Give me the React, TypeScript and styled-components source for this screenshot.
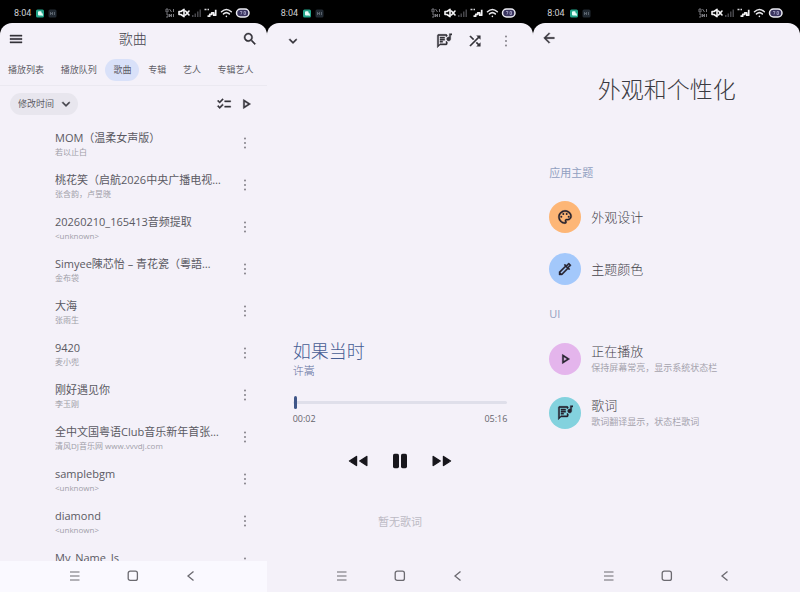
import React, { useState } from "react";
import styled, { createGlobalStyle, css } from "styled-components";
import {
  MdArrowBack,
  MdChecklist,
  MdExpandMore,
  MdMenu,
  MdOutlineColorize,
  MdOutlineLyrics,
  MdOutlinePalette,
  MdOutlinePlayArrow,
  MdSearch,
  MdShuffle,
} from "react-icons/md";

const Global = createGlobalStyle`
  * { box-sizing: border-box; }
  body {
    margin: 0;
    background: #000;
    color: #45444c;
    font-family: "Open Sans", "Noto Sans CJK SC", sans-serif;
    font-weight: 300;
  }
  h1, h2, p, ul { margin: 0; padding: 0; font-weight: inherit; }
  button, select, input { font: inherit; color: inherit; margin: 0; }
  svg { display: block; flex: none; }
`;

const heavierGlyph = css`
  svg[viewBox="0 0 24 24"] path:not([fill="none"]) {
    stroke-width: 0.6;
  }
`;

const Page = styled.main`
  display: grid;
  grid-template-columns: repeat(3, minmax(0, 1fr));
  height: 100vh;
  background: #000;
`;

const Phone = styled.section`
  display: flex;
  flex-direction: column;
  min-width: 0;
  min-height: 0;
`;

const StatusRow = styled.div`
  display: flex;
  align-items: center;
  flex: none;
  height: 23px;
  padding: 3px 16px 0 14px;
  color: #d0d0d4;
`;

const Clock = styled.time`
  font-family: Roboto, sans-serif;
  font-size: 9px;
  font-weight: 400;
  line-height: 12px;
  margin-right: 4px;
`;

const Sheet = styled.div`
  display: flex;
  flex-direction: column;
  flex: 1;
  min-height: 0;
  overflow: hidden;
  background: #f4f1f9;
  border-radius: 12px 12px 0 0;
`;

const IconButton = styled.button<{ $color?: string }>`
  display: flex;
  align-items: center;
  justify-content: center;
  flex: none;
  width: 20px;
  height: 20px;
  padding: 0;
  border: 0;
  background: none;
  color: ${(p) => p.$color ?? "#34333a"};
  ${heavierGlyph}
`;

const NavBar = styled.nav<{ $raised?: boolean }>`
  display: flex;
  align-items: center;
  justify-content: center;
  gap: 38px;
  flex: none;
  height: 31px;
  padding-bottom: 2px;
  margin-top: auto;
  background: ${(p) => (p.$raised ? "#faf9ff" : "transparent")};
`;

const LibraryHeader = styled.header`
  display: flex;
  align-items: center;
  justify-content: space-between;
  flex: none;
  height: 32px;
  padding: 0 7px 0 6px;
`;

const LibraryTitle = styled.h1`
  font-size: 14px;
  line-height: 20px;
`;

const Tabs = styled.div`
  display: flex;
  align-items: center;
  justify-content: space-between;
  flex: none;
  height: 31px;
  padding: 0 5px 0 0;
  border-bottom: 1px solid #ebe9f1;
`;

const Tab = styled.button<{ $active: boolean }>`
  height: 22px;
  padding: 0 8px;
  border: 0;
  border-radius: 11px;
  font-size: 9px;
  font-weight: 400;
  line-height: 22px;
  white-space: nowrap;
  color: #5e5d66;
  background: ${(p) => (p.$active ? "#d9e1f9" : "transparent")};
`;

const SortBar = styled.div`
  display: flex;
  align-items: center;
  justify-content: space-between;
  flex: none;
  height: 36px;
  padding: 0 11px 0 10px;
`;

const SortBox = styled.label`
  display: flex;
  align-items: center;
  height: 22px;
  padding: 0 4px 0 8px;
  border-radius: 11px;
  background: #e8e6ee;
  ${heavierGlyph}
`;

const SortSelect = styled.select`
  appearance: none;
  width: 40px;
  padding: 0;
  border: 0;
  outline: 0;
  background: transparent;
  font-size: 9px;
  font-weight: 400;
  line-height: 20px;
  color: #5e5d66;
`;

const SortActions = styled.div`
  display: flex;
  gap: 2px;
`;

const SongList = styled.ul`
  flex: 1;
  min-height: 0;
  overflow: hidden;
  list-style: none;
`;

const SongRow = styled.li`
  display: flex;
  align-items: center;
  height: 42px;
  padding: 0 12px 0 55px;
`;

const SongText = styled.div`
  flex: 1;
  min-width: 0;
`;

const SongName = styled.p`
  white-space: nowrap;
  font-size: 11px;
  font-weight: 400;
  line-height: 18px;
  color: #5a5962;
`;

const SongArtist = styled.p`
  white-space: nowrap;
  font-size: 8px;
  font-weight: 400;
  line-height: 10px;
  color: #a09ea8;
`;

const PlayerHeader = styled.header`
  display: flex;
  align-items: center;
  gap: 11px;
  flex: none;
  height: 36px;
  padding: 0 17px 0 16px;
`;

const Spacer = styled.div`
  flex: 1;
`;

const Player = styled.div`
  display: flex;
  flex-direction: column;
  flex: 1;
  justify-content: flex-end;
  padding: 0 26px 31px;
`;

const TrackTitle = styled.h1`
  font-size: 18px;
  line-height: 24px;
  color: #465d94;
`;

const TrackArtist = styled.p`
  font-size: 11px;
  line-height: 16px;
  color: #5f6f9c;
`;

const Seek = styled.input`
  appearance: none;
  display: block;
  width: 100%;
  height: 14px;
  margin: 16px 0 0;
  background: transparent;
  &::-webkit-slider-runnable-track {
    height: 3px;
    border-radius: 2px;
    background: #dfdfea;
  }
  &::-webkit-slider-thumb {
    appearance: none;
    width: 3px;
    height: 13px;
    margin-top: -5px;
    border-radius: 2px;
    background: #3f5688;
  }
`;

const Times = styled.div`
  display: flex;
  justify-content: space-between;
  padding-top: 4px;
  font-size: 9px;
  font-weight: 400;
  line-height: 12px;
  color: #66656d;
`;

const Controls = styled.div`
  display: flex;
  align-items: center;
  justify-content: center;
  gap: 22px;
  margin-top: 26px;
`;

const LyricsHint = styled.p`
  margin-top: 43px;
  text-align: center;
  font-size: 11px;
  font-weight: 400;
  line-height: 16px;
  color: #bcbac4;
`;

const SettingsHeader = styled.header`
  flex: none;
  height: 32px;
  padding: 5px 0 0 6px;
`;

const SettingsTitle = styled.h1`
  padding: 18px 0 58px;
  text-align: center;
  font-size: 23px;
  line-height: 32px;
  color: #3b3a41;
`;

const Group = styled.section`
  padding: 0 16px;
`;

const GroupTitle = styled.h2`
  font-size: 11px;
  font-weight: 400;
  line-height: 20px;
  color: #919fc0;
`;

const Options = styled.ul`
  display: flex;
  flex-direction: column;
  gap: 20px;
  padding: 18px 0 19px;
  list-style: none;
`;

const OptionButton = styled.button`
  display: flex;
  align-items: center;
  gap: 10px;
  width: 100%;
  padding: 0;
  border: 0;
  background: none;
  text-align: left;
`;

const OptionIcon = styled.span<{ $tint: string }>`
  display: flex;
  align-items: center;
  justify-content: center;
  flex: none;
  width: 32px;
  height: 32px;
  border-radius: 50%;
  color: #25222e;
  background: ${(p) => p.$tint};
  ${heavierGlyph}
`;

const OptionName = styled.span`
  display: block;
  font-size: 13px;
  line-height: 18px;
`;

const OptionNote = styled.span`
  display: block;
  font-size: 9px;
  font-weight: 400;
  line-height: 16px;
  color: #a5a3ad;
`;

function StatusBar() {
  return (
    <StatusRow>
      <Clock>8:04</Clock>
      <svg width="22" height="9" viewBox="0 0 22 9" aria-hidden="true">
        <rect x="1" y="0.5" width="8" height="8" rx="1.5" fill="#22a389" />
        <path d="M3 3.2a1 1 0 0 1 1-1h1.6a1 1 0 0 1 1 1v1h.6a.8.8 0 0 1 .6.8v2L6.7 6.4H4a1 1 0 0 1-1-1z" fill="#e8fffa" />
        <rect x="13.5" y="0.5" width="8" height="8" rx="1.5" fill="#222a33" />
        <path d="M15.5 3v3M15.5 4.5h2M17.5 3v3M19.5 3v3" stroke="#66707a" strokeWidth="0.8" />
      </svg>
      <Spacer />
      <svg width="86" height="12" viewBox="0 0 86 12" aria-hidden="true">
        <g fill="none" stroke="#85858a" strokeWidth="0.9">
          <path d="M1 2v3h2V2zM4.5 2l2 3M8.5 2v3M1 7h2v3H1M4.5 7v3l2-3v3M8.5 7v3" />
        </g>
        <g fill="none" stroke="#f4f4f6" strokeWidth="1.6" strokeLinejoin="round" strokeLinecap="round">
          <path d="M14 4.5h2l3-2.2v7.4l-3-2.2h-2zM20.5 4l3.5 4M24 4l-3.5 4" />
        </g>
        <g fill="#46464b">
          <rect x="27" y="8" width="1.5" height="2" />
          <rect x="29.5" y="6.5" width="1.5" height="3.5" />
          <rect x="32" y="4.5" width="1.5" height="5.5" />
          <rect x="34.5" y="2.5" width="1.5" height="7.5" />
        </g>
        <path d="M39.5 2.5h2M42.5 2.5h1.5" stroke="#d4d4d8" strokeWidth="1.3" />
        <path d="M42.5 9.2h2.2V7.4h2V5.8h2v2.4h2V2.8" fill="none" stroke="#f0f0f2" strokeWidth="1.7" strokeLinejoin="round" />
        <g fill="none" stroke="#e6e6ea" strokeWidth="1.5" strokeLinecap="round">
          <path d="M56.5 4.7c3-2.8 6.8-2.8 9.8 0M58.5 6.9c1.8-1.6 4-1.6 5.8 0" />
          <path d="M61.4 9.2v.2" />
        </g>
        <rect x="71.5" y="2" width="12.5" height="8" rx="4" fill="#39345f" stroke="#ececf2" strokeWidth="1.5" />
        <path d="M75 4.5h2l-1 3M79 4.5h1.5v3H79z" fill="none" stroke="#aaa6ca" strokeWidth="0.8" />
      </svg>
    </StatusRow>
  );
}

function MoreButton() {
  return (
    <IconButton aria-label="更多" $color="#77757e">
      <svg width="12" height="12" viewBox="0 0 12 12" fill="currentColor">
        <circle cx="6" cy="1.5" r="0.9" />
        <circle cx="6" cy="6" r="0.9" />
        <circle cx="6" cy="10.5" r="0.9" />
      </svg>
    </IconButton>
  );
}

function SystemNav({ raised }: { raised?: boolean }) {
  return (
    <NavBar $raised={raised} aria-label="系统导航">
      <IconButton aria-label="最近任务" $color="#6b6a70">
        <svg width="12" height="12" viewBox="0 0 12 12" fill="none" stroke="currentColor" strokeWidth="1.2">
          <path d="M1 2h9.5M1 6h9.5M1 10h9.5" />
        </svg>
      </IconButton>
      <IconButton aria-label="主屏幕" $color="#6b6a70">
        <svg width="12" height="12" viewBox="0 0 12 12" fill="none" stroke="currentColor" strokeWidth="1.3">
          <rect x="1.2" y="1.2" width="9.2" height="9.2" rx="2" />
        </svg>
      </IconButton>
      <IconButton aria-label="返回" $color="#6b6a70">
        <svg width="12" height="12" viewBox="0 0 12 12" fill="none" stroke="currentColor" strokeWidth="1.3">
          <path d="M8.5 1.5 3 6 8.5 10.5" />
        </svg>
      </IconButton>
    </NavBar>
  );
}

const tabs = ["播放列表", "播放队列", "歌曲", "专辑", "艺人", "专辑艺人"];

const songs = [
  { name: "MOM（温柔女声版）", artist: "若以止白" },
  { name: "桃花笑（启航2026中央广播电视…", artist: "张含韵，卢昱晓" },
  { name: "20260210_165413音频提取", artist: "<unknown>" },
  { name: "Simyee陳芯怡 – 青花瓷（粵語…", artist: "金布袋" },
  { name: "大海", artist: "张雨生" },
  { name: "9420", artist: "麦小兜" },
  { name: "刚好遇见你", artist: "李玉刚" },
  { name: "全中文国粤语Club音乐新年首张…", artist: "清风DJ音乐网 www.vvvdj.com" },
  { name: "samplebgm", artist: "<unknown>" },
  { name: "diamond", artist: "<unknown>" },
  { name: "My_Name_Is", artist: "<unknown>" },
];

function LibraryScreen() {
  const [active, setActive] = useState("歌曲");
  return (
    <Phone>
      <StatusBar />
      <Sheet>
        <LibraryHeader>
          <IconButton aria-label="菜单"><MdMenu size={16} /></IconButton>
          <LibraryTitle>歌曲</LibraryTitle>
          <IconButton aria-label="搜索"><MdSearch size={16} /></IconButton>
        </LibraryHeader>
        <Tabs role="tablist">
          {tabs.map((name) => (
            <Tab key={name} role="tab" aria-selected={name === active} $active={name === active} onClick={() => setActive(name)}>
              {name}
            </Tab>
          ))}
        </Tabs>
        <SortBar>
          <SortBox>
            <SortSelect aria-label="排序方式">
              <option>修改时间</option>
            </SortSelect>
            <MdExpandMore size={16} />
          </SortBox>
          <SortActions>
            <IconButton aria-label="多选"><MdChecklist size={16} /></IconButton>
            <IconButton aria-label="播放"><MdOutlinePlayArrow size={16} /></IconButton>
          </SortActions>
        </SortBar>
        <SongList>
          {songs.map((song) => (
            <SongRow key={song.name}>
              <SongText>
                <SongName>{song.name}</SongName>
                <SongArtist>{song.artist}</SongArtist>
              </SongText>
              <MoreButton />
            </SongRow>
          ))}
        </SongList>
        <SystemNav raised />
      </Sheet>
    </Phone>
  );
}

function PlayerScreen() {
  const [position, setPosition] = useState(2);
  return (
    <Phone>
      <StatusBar />
      <Sheet>
        <PlayerHeader>
          <IconButton aria-label="收起"><MdExpandMore size={16} /></IconButton>
          <Spacer />
          <IconButton aria-label="歌词"><MdOutlineLyrics size={16} /></IconButton>
          <IconButton aria-label="随机播放"><MdShuffle size={16} /></IconButton>
          <MoreButton />
        </PlayerHeader>
        <Player>
          <TrackTitle>如果当时</TrackTitle>
          <TrackArtist>许嵩</TrackArtist>
          <Seek
            type="range"
            aria-label="播放进度"
            min={0}
            max={316}
            value={position}
            onChange={(e) => setPosition(Number(e.target.value))}
          />
          <Times>
            <span>00:02</span>
            <span>05:16</span>
          </Times>
          <Controls>
            <IconButton aria-label="上一首" $color="#17161c">
              <svg width="20" height="12" viewBox="0 0 20 12" fill="currentColor" stroke="currentColor" strokeWidth="1.4" strokeLinejoin="round">
                <path d="M8.5 1.5v9L1.5 6zM18.8 1.5v9l-7-4.5z" />
              </svg>
            </IconButton>
            <IconButton aria-label="暂停" $color="#17161c">
              <svg width="16" height="16" viewBox="0 0 16 16" fill="currentColor">
                <rect x="1" y="0.8" width="6" height="14.4" rx="1.6" />
                <rect x="9" y="0.8" width="6" height="14.4" rx="1.6" />
              </svg>
            </IconButton>
            <IconButton aria-label="下一首" $color="#17161c">
              <svg width="20" height="12" viewBox="0 0 20 12" fill="currentColor" stroke="currentColor" strokeWidth="1.4" strokeLinejoin="round">
                <path d="M1.2 1.5v9l7-4.5zM11.5 1.5v9l7-4.5z" />
              </svg>
            </IconButton>
          </Controls>
          <LyricsHint>暂无歌词</LyricsHint>
        </Player>
        <SystemNav />
      </Sheet>
    </Phone>
  );
}

const groups = [
  {
    title: "应用主题",
    options: [
      { name: "外观设计", note: "", tint: "#fdb676", icon: <MdOutlinePalette size={16} /> },
      { name: "主题颜色", note: "", tint: "#a3c8fb", icon: <MdOutlineColorize size={16} /> },
    ],
  },
  {
    title: "UI",
    options: [
      { name: "正在播放", note: "保持屏幕常亮，显示系统状态栏", tint: "#e4b5ec", icon: <MdOutlinePlayArrow size={16} /> },
      { name: "歌词", note: "歌词翻译显示，状态栏歌词", tint: "#83d2de", icon: <MdOutlineLyrics size={16} /> },
    ],
  },
];

function AppearanceScreen() {
  return (
    <Phone>
      <StatusBar />
      <Sheet>
        <SettingsHeader>
          <IconButton aria-label="返回"><MdArrowBack size={16} /></IconButton>
        </SettingsHeader>
        <SettingsTitle>外观和个性化</SettingsTitle>
        {groups.map((group) => (
          <Group key={group.title}>
            <GroupTitle>{group.title}</GroupTitle>
            <Options>
              {group.options.map((option) => (
                <li key={option.name}>
                  <OptionButton>
                    <OptionIcon $tint={option.tint}>{option.icon}</OptionIcon>
                    <span>
                      <OptionName>{option.name}</OptionName>
                      {option.note && <OptionNote>{option.note}</OptionNote>}
                    </span>
                  </OptionButton>
                </li>
              ))}
            </Options>
          </Group>
        ))}
        <SystemNav />
      </Sheet>
    </Phone>
  );
}

export default function App() {
  return (
    <>
      <Global />
      <Page>
        <LibraryScreen />
        <PlayerScreen />
        <AppearanceScreen />
      </Page>
    </>
  );
}
